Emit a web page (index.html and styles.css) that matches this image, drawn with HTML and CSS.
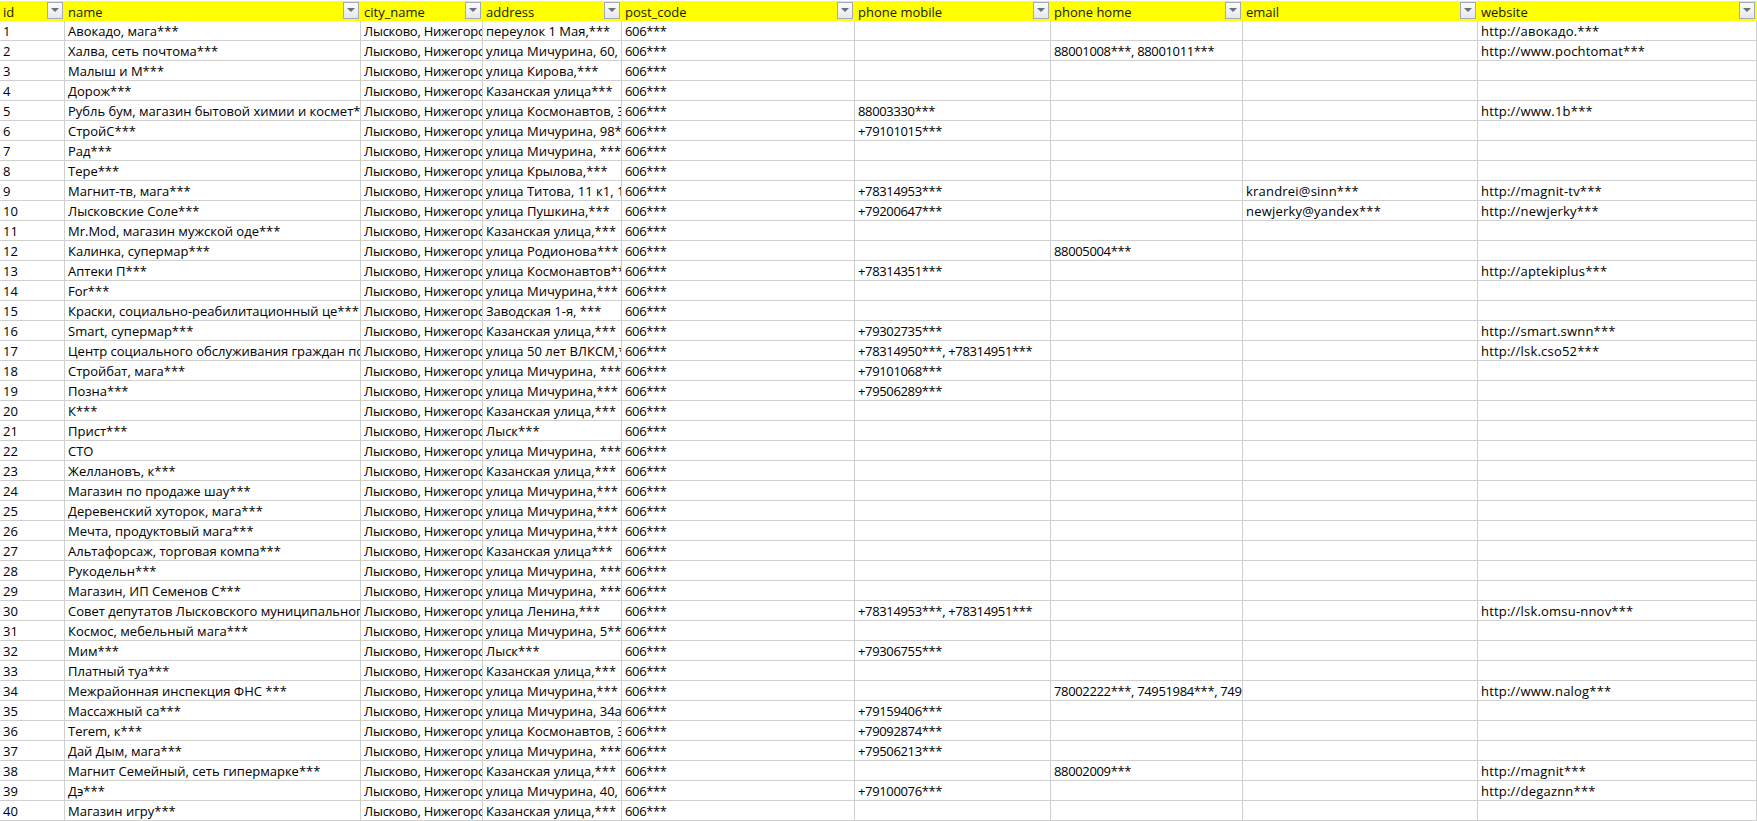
FILE: index.html
```html
<!DOCTYPE html>
<html lang="ru">
<head>
<meta charset="utf-8">
<title>Таблица</title>
<link rel="stylesheet" href="styles.css">
</head>
<body>
<table class="sheet">
<colgroup><col class="c-id"><col class="c-name"><col class="c-city"><col class="c-addr"><col class="c-post"><col class="c-mob"><col class="c-home"><col class="c-email"><col class="c-web"></colgroup>
<thead><tr>
<th><div class="hd"><span>id</span><i class="fb"></i></div></th>
<th><div class="hd"><span>name</span><i class="fb"></i></div></th>
<th><div class="hd"><span>city_name</span><i class="fb"></i></div></th>
<th><div class="hd"><span>address</span><i class="fb"></i></div></th>
<th><div class="hd"><span>post_code</span><i class="fb"></i></div></th>
<th><div class="hd"><span>phone mobile</span><i class="fb"></i></div></th>
<th><div class="hd"><span>phone home</span><i class="fb"></i></div></th>
<th><div class="hd"><span>email</span><i class="fb"></i></div></th>
<th><div class="hd"><span>website</span><i class="fb"></i></div></th>
</tr></thead>
<tbody>
<tr><td>1</td><td>Авокадо, мага***</td><td>Лысково, Нижегородская область</td><td>переулок 1 Мая,***</td><td>606***</td><td></td><td></td><td></td><td>http://авокадо.***</td></tr>
<tr><td>2</td><td>Халва, сеть почтома***</td><td>Лысково, Нижегородская область</td><td>улица Мичурина, 60, офис***</td><td>606***</td><td></td><td>88001008***, 88001011***</td><td></td><td>http://www.pochtomat***</td></tr>
<tr><td>3</td><td>Малыш и М***</td><td>Лысково, Нижегородская область</td><td>улица Кирова,***</td><td>606***</td><td></td><td></td><td></td><td></td></tr>
<tr><td>4</td><td>Дорож***</td><td>Лысково, Нижегородская область</td><td>Казанская улица***</td><td>606***</td><td></td><td></td><td></td><td></td></tr>
<tr><td>5</td><td>Рубль бум, магазин бытовой химии и космет***</td><td>Лысково, Нижегородская область</td><td>улица Космонавтов, 3***</td><td>606***</td><td>88003330***</td><td></td><td></td><td>http://www.1b***</td></tr>
<tr><td>6</td><td>СтройС***</td><td>Лысково, Нижегородская область</td><td>улица Мичурина, 98***</td><td>606***</td><td>+79101015***</td><td></td><td></td><td></td></tr>
<tr><td>7</td><td>Рад***</td><td>Лысково, Нижегородская область</td><td>улица Мичурина, ***</td><td>606***</td><td></td><td></td><td></td><td></td></tr>
<tr><td>8</td><td>Тере***</td><td>Лысково, Нижегородская область</td><td>улица Крылова,***</td><td>606***</td><td></td><td></td><td></td><td></td></tr>
<tr><td>9</td><td>Магнит-тв, мага***</td><td>Лысково, Нижегородская область</td><td>улица Титова, 11 к1, 1***</td><td>606***</td><td>+78314953***</td><td></td><td>krandrei@sinn***</td><td>http://magnit-tv***</td></tr>
<tr><td>10</td><td>Лысковские Соле***</td><td>Лысково, Нижегородская область</td><td>улица Пушкина,***</td><td>606***</td><td>+79200647***</td><td></td><td>newjerky@yandex***</td><td>http://newjerky***</td></tr>
<tr><td>11</td><td>Mr.Mod, магазин мужской оде***</td><td>Лысково, Нижегородская область</td><td>Казанская улица,***</td><td>606***</td><td></td><td></td><td></td><td></td></tr>
<tr><td>12</td><td>Калинка, супермар***</td><td>Лысково, Нижегородская область</td><td>улица Родионова***</td><td>606***</td><td></td><td>88005004***</td><td></td><td></td></tr>
<tr><td>13</td><td>Аптеки П***</td><td>Лысково, Нижегородская область</td><td>улица Космонавтов***</td><td>606***</td><td>+78314351***</td><td></td><td></td><td>http://aptekiplus***</td></tr>
<tr><td>14</td><td>For***</td><td>Лысково, Нижегородская область</td><td>улица Мичурина,***</td><td>606***</td><td></td><td></td><td></td><td></td></tr>
<tr><td>15</td><td>Краски, социально-реабилитационный це***</td><td>Лысково, Нижегородская область</td><td>Заводская 1-я, ***</td><td>606***</td><td></td><td></td><td></td><td></td></tr>
<tr><td>16</td><td>Smart, супермар***</td><td>Лысково, Нижегородская область</td><td>Казанская улица,***</td><td>606***</td><td>+79302735***</td><td></td><td></td><td>http://smart.swnn***</td></tr>
<tr><td>17</td><td>Центр социального обслуживания граждан пожилого***</td><td>Лысково, Нижегородская область</td><td>улица 50 лет ВЛКСМ,***</td><td>606***</td><td>+78314950***, +78314951***</td><td></td><td></td><td>http://lsk.cso52***</td></tr>
<tr><td>18</td><td>Стройбат, мага***</td><td>Лысково, Нижегородская область</td><td>улица Мичурина, ***</td><td>606***</td><td>+79101068***</td><td></td><td></td><td></td></tr>
<tr><td>19</td><td>Позна***</td><td>Лысково, Нижегородская область</td><td>улица Мичурина,***</td><td>606***</td><td>+79506289***</td><td></td><td></td><td></td></tr>
<tr><td>20</td><td>К***</td><td>Лысково, Нижегородская область</td><td>Казанская улица,***</td><td>606***</td><td></td><td></td><td></td><td></td></tr>
<tr><td>21</td><td>Прист***</td><td>Лысково, Нижегородская область</td><td>Лыск***</td><td>606***</td><td></td><td></td><td></td><td></td></tr>
<tr><td>22</td><td>СТО</td><td>Лысково, Нижегородская область</td><td>улица Мичурина, ***</td><td>606***</td><td></td><td></td><td></td><td></td></tr>
<tr><td>23</td><td>Желлановъ, к***</td><td>Лысково, Нижегородская область</td><td>Казанская улица,***</td><td>606***</td><td></td><td></td><td></td><td></td></tr>
<tr><td>24</td><td>Магазин по продаже шау***</td><td>Лысково, Нижегородская область</td><td>улица Мичурина,***</td><td>606***</td><td></td><td></td><td></td><td></td></tr>
<tr><td>25</td><td>Деревенский хуторок, мага***</td><td>Лысково, Нижегородская область</td><td>улица Мичурина,***</td><td>606***</td><td></td><td></td><td></td><td></td></tr>
<tr><td>26</td><td>Мечта, продуктовый мага***</td><td>Лысково, Нижегородская область</td><td>улица Мичурина,***</td><td>606***</td><td></td><td></td><td></td><td></td></tr>
<tr><td>27</td><td>Альтафорсаж, торговая компа***</td><td>Лысково, Нижегородская область</td><td>Казанская улица***</td><td>606***</td><td></td><td></td><td></td><td></td></tr>
<tr><td>28</td><td>Рукодельн***</td><td>Лысково, Нижегородская область</td><td>улица Мичурина, ***</td><td>606***</td><td></td><td></td><td></td><td></td></tr>
<tr><td>29</td><td>Магазин, ИП Семенов С***</td><td>Лысково, Нижегородская область</td><td>улица Мичурина, ***</td><td>606***</td><td></td><td></td><td></td><td></td></tr>
<tr><td>30</td><td>Совет депутатов Лысковского муниципального***</td><td>Лысково, Нижегородская область</td><td>улица Ленина,***</td><td>606***</td><td>+78314953***, +78314951***</td><td></td><td></td><td>http://lsk.omsu-nnov***</td></tr>
<tr><td>31</td><td>Космос, мебельный мага***</td><td>Лысково, Нижегородская область</td><td>улица Мичурина, 5***</td><td>606***</td><td></td><td></td><td></td><td></td></tr>
<tr><td>32</td><td>Мим***</td><td>Лысково, Нижегородская область</td><td>Лыск***</td><td>606***</td><td>+79306755***</td><td></td><td></td><td></td></tr>
<tr><td>33</td><td>Платный туа***</td><td>Лысково, Нижегородская область</td><td>Казанская улица,***</td><td>606***</td><td></td><td></td><td></td><td></td></tr>
<tr><td>34</td><td>Межрайонная инспекция ФНС ***</td><td>Лысково, Нижегородская область</td><td>улица Мичурина,***</td><td>606***</td><td></td><td>78002222***, 74951984***, 74951984***</td><td></td><td>http://www.nalog***</td></tr>
<tr><td>35</td><td>Массажный са***</td><td>Лысково, Нижегородская область</td><td>улица Мичурина, 34а,***</td><td>606***</td><td>+79159406***</td><td></td><td></td><td></td></tr>
<tr><td>36</td><td>Terem, к***</td><td>Лысково, Нижегородская область</td><td>улица Космонавтов, 3***</td><td>606***</td><td>+79092874***</td><td></td><td></td><td></td></tr>
<tr><td>37</td><td>Дай Дым, мага***</td><td>Лысково, Нижегородская область</td><td>улица Мичурина, ***</td><td>606***</td><td>+79506213***</td><td></td><td></td><td></td></tr>
<tr><td>38</td><td>Магнит Семейный, сеть гипермарке***</td><td>Лысково, Нижегородская область</td><td>Казанская улица,***</td><td>606***</td><td></td><td>88002009***</td><td></td><td>http://magnit***</td></tr>
<tr><td>39</td><td>Дэ***</td><td>Лысково, Нижегородская область</td><td>улица Мичурина, 40, ***</td><td>606***</td><td>+79100076***</td><td></td><td></td><td>http://degaznn***</td></tr>
<tr><td>40</td><td>Магазин игру***</td><td>Лысково, Нижегородская область</td><td>Казанская улица,***</td><td>606***</td><td></td><td></td><td></td><td></td></tr>
</tbody>
</table>
</body>
</html>
```
FILE: styles.css
```css
html, body { margin: 0; padding: 0; background: #fff; overflow: hidden; }
body { padding-top: 1px; }
.sheet {
  table-layout: fixed;
  width: 1757px;
  border-collapse: separate;
  border-spacing: 0;
  font-family: "Open Sans", "Liberation Sans", sans-serif;
  font-size: 13px;
  color: #000;
}
.c-id { width: 65px; }
.c-name { width: 296px; }
.c-city { width: 122px; }
.c-addr { width: 139px; }
.c-post { width: 233px; }
.c-mob { width: 196px; }
.c-home { width: 192px; }
.c-email { width: 235px; }
.c-web { width: 279px; }
th {
  height: 20px;
  padding: 0;
  background: #ffff00;
  font-weight: 400;
  text-align: left;
}
.hd {
  display: flex;
  align-items: center;
  justify-content: space-between;
  height: 20px;
  padding: 0 2px 0 3px;
  overflow: hidden;
  color: #1a1a00;
}
.hd span { padding-top: 1px; }
.fb {
  flex: none;
  width: 16px;
  height: 17px;
  margin-top: -1px;
  box-sizing: border-box;
  border: 1px solid #a3a9bb;
  background: linear-gradient(#fbfcfd, #e6e8ec);
  position: relative;
}
.fb::after {
  content: "";
  position: absolute;
  left: 3px;
  top: 5px;
  border-left: 4px solid transparent;
  border-right: 4px solid transparent;
  border-top: 4px solid #6b6f78;
}
td {
  height: 17px;
  padding: 2px 2px 0 3px;
  border-right: 1px solid #d0d0d0;
  border-bottom: 1px solid #d0d0d0;
  white-space: nowrap;
  overflow: hidden;
  line-height: 17px;
}
td:nth-child(3) { letter-spacing: -0.25px; }
td:nth-child(5),
td:nth-child(6),
td:nth-child(7) { letter-spacing: -0.35px; }
td:nth-child(8),
td:nth-child(9) { letter-spacing: 0.2px; }
```
